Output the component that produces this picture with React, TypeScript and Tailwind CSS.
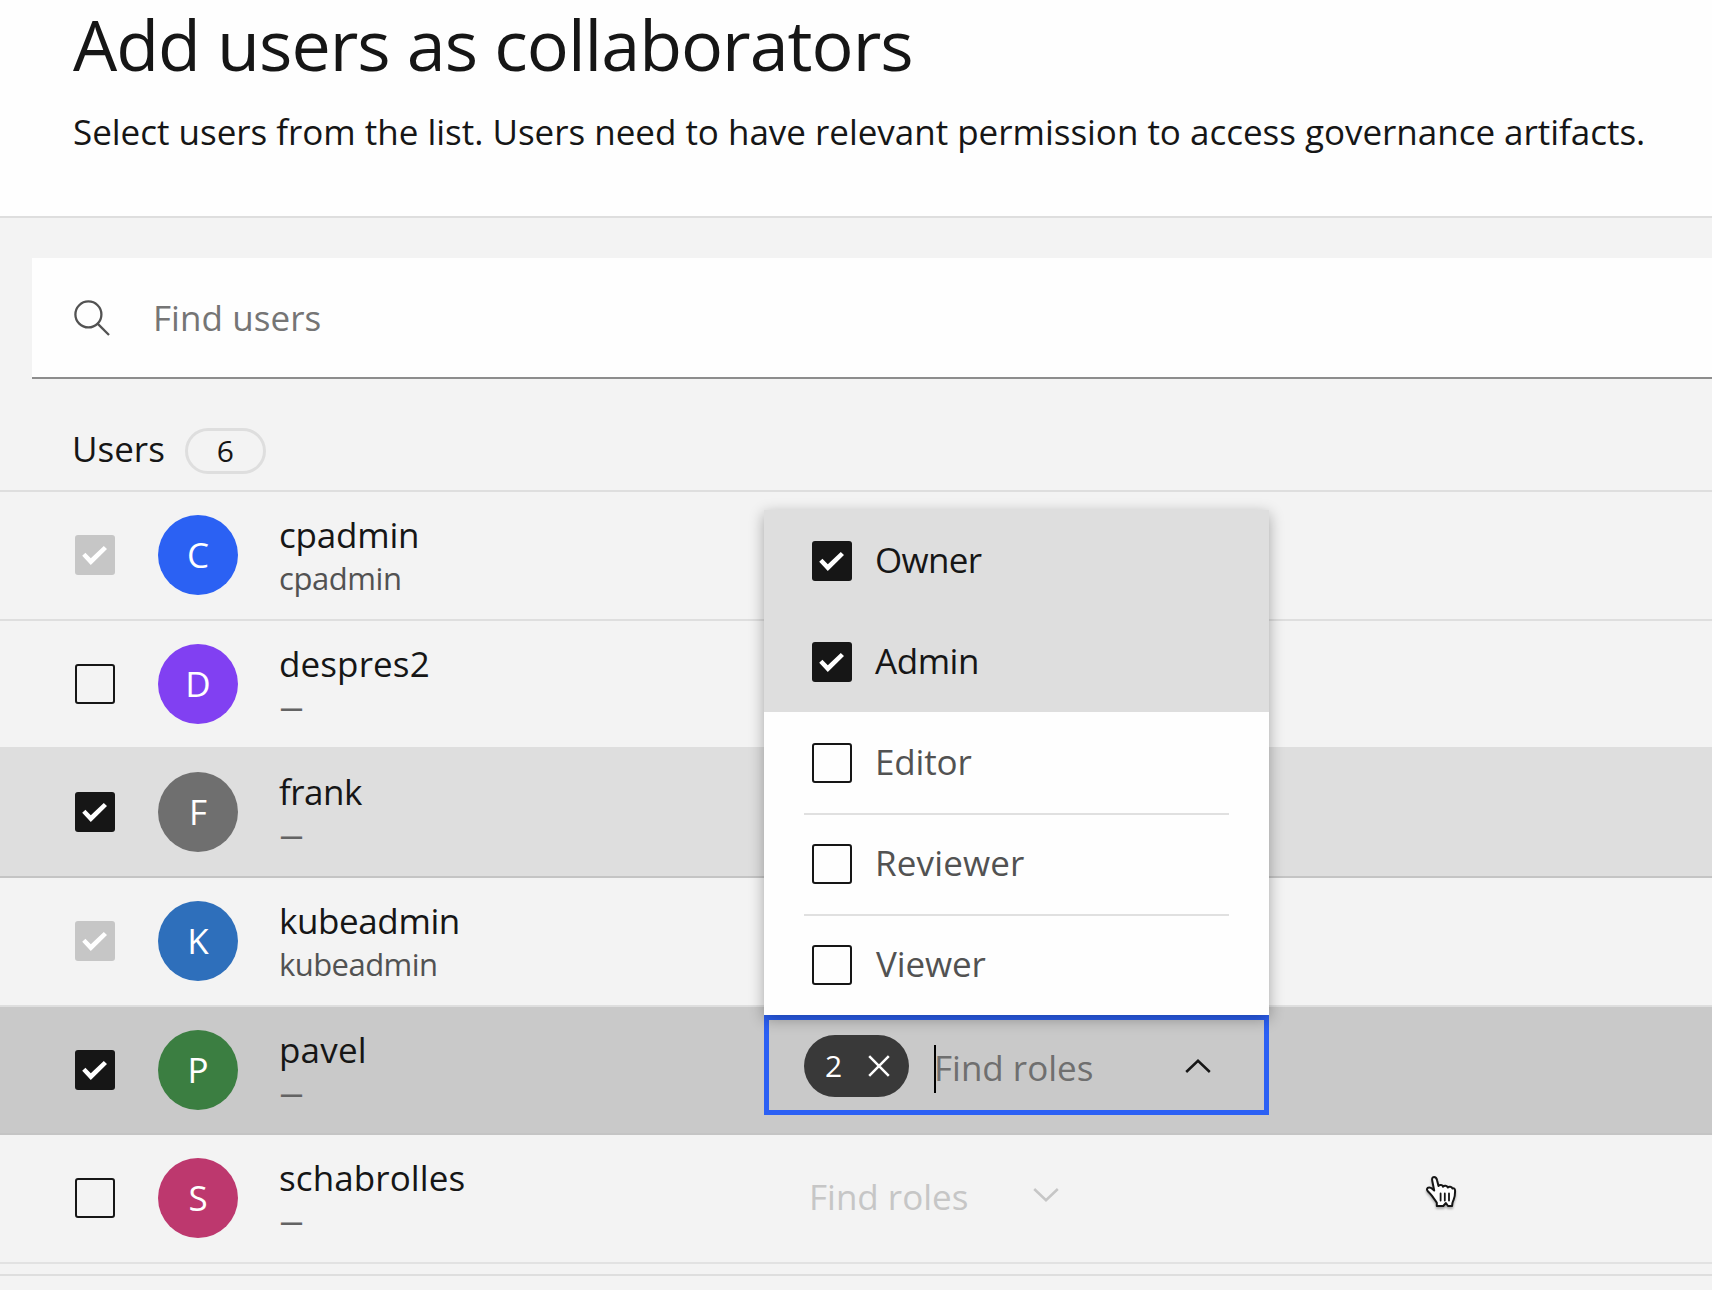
import type { ReactNode } from "react";

function Checkbox({ state }: { state: "on" | "off" | "locked" }) {
  if (state === "off") {
    return <span className="h-10 w-10 shrink-0 rounded-[3px] border-2 border-[#161616]" />;
  }
  return (
    <span
      className={`h-10 w-10 shrink-0 rounded-[3px] ${state === "on" ? "bg-[#161616]" : "bg-[#c6c6c6]"}`}
    >
      <svg viewBox="0 0 40 40" className="h-10 w-10" fill="#fff">
        <path d="M7.2 20.8 10.4 17.7 15.8 23.2 28.8 11 32 14.1 15.8 30Z" />
      </svg>
    </span>
  );
}

function Chevron({ up, className }: { up?: boolean; className: string }) {
  return (
    <svg viewBox="0 0 26 14" className={`h-3.5 w-[26px] ${className}`} fill="none" stroke="currentColor" strokeWidth="2.5">
      <path d={up ? "M1.2 13 13 1.8 24.8 13" : "M1.2 1 13 12.2 24.8 1"} />
    </svg>
  );
}

const roles = [
  { name: "Owner", on: true, text: "ml-[23px] tracking-[-0.7px]" },
  { name: "Admin", on: true, text: "ml-[23px] tracking-[-0.45px]" },
  { name: "Editor", on: false, text: "ml-[23px] tracking-[-0.15px]" },
  { name: "Reviewer", on: false, text: "ml-[23px] tracking-[0.14px]" },
  { name: "Viewer", on: false, text: "ml-6 tracking-[-0.12px]" },
];

function RoleMenu() {
  return (
    <ul className="absolute bottom-[95px] -left-[5px] z-20 h-[505px] w-[505px] bg-[#fefefe] shadow-[0_4px_14px_rgba(0,0,0,0.32)]">
      {roles.map((role, i) => (
        <li
          key={role.name}
          className={`px-10 ${role.on ? "bg-[#dedede] text-[#161616]" : "text-[#525252]"}`}
        >
          <div
            className={`flex h-[101px] items-center pl-2 ${i > 2 ? "border-t-2 border-[#e0e0e0] pb-0.5" : ""}`}
          >
            <Checkbox state={role.on ? "on" : "off"} />
            <span className={`pb-0.5 leading-[48px] ${role.text}`}>{role.name}</span>
          </div>
        </li>
      ))}
    </ul>
  );
}

function ActiveRoleField() {
  return (
    <div className="relative mt-2 flex h-[100px] w-[505px] items-center border-[5px] border-[#2b60f4] pr-[53px] pl-[35px]">
      <RoleMenu />
      <span className="mt-0.5 flex h-[62px] w-[105px] items-center rounded-full bg-[#393939] pr-[19px] pl-[21px] text-white">
        <span className="text-[30px] leading-10">2</span>
        <svg viewBox="0 0 22 22" className="ml-auto h-[22px] w-[22px]" stroke="currentColor" strokeWidth="2.5">
          <path d="M1.2 1.2 20.8 20.8M20.8 1.2 1.2 20.8" />
        </svg>
      </span>
      <span className="mt-2 ml-[25px] h-12 w-0.5 bg-black" />
      <span className="mt-1.5 -ml-0.5 leading-[48px] text-[#6f6f6f]">Find roles</span>
      <Chevron up className="mt-0.5 ml-auto text-[#161616]" />
    </div>
  );
}

function DisabledRoleField() {
  return (
    <div className="mt-2 flex h-[100px] w-[505px] items-center pl-[45px] text-[#c6c6c6]">
      <span className="mt-2 leading-[48px]">Find roles</span>
      <Chevron className="mt-1 ml-[65px]" />
    </div>
  );
}

type User = {
  name: string;
  nameStyle: string;
  login?: string;
  loginStyle?: string;
  initial: string;
  avatar: string;
  box: "on" | "off" | "locked";
  row: string;
  field?: ReactNode;
};

const users: User[] = [
  {
    name: "cpadmin", nameStyle: "tracking-[-0.21px]", login: "cpadmin", loginStyle: "tracking-[-0.42px]",
    initial: "C", avatar: "bg-[#2b61f3]", box: "locked", row: "h-[129px] border-[#dedede]",
  },
  {
    name: "despres2", nameStyle: "tracking-[0.12px]",
    initial: "D", avatar: "bg-[#8140f2]", box: "off", row: "h-[128px] border-[#dedede]",
  },
  {
    name: "frank", nameStyle: "tracking-[-0.5px]",
    initial: "F", avatar: "bg-[#6f6f6f]", box: "on", row: "h-[129px] border-[#c4c4c4] bg-[#dedede]",
  },
  {
    name: "kubeadmin", nameStyle: "tracking-[-0.4px]", login: "kubeadmin", loginStyle: "tracking-[-0.55px]",
    initial: "K", avatar: "bg-[#2e6fbb]", box: "locked", row: "h-[129px] border-[#dedede]",
  },
  {
    name: "pavel", nameStyle: "tracking-[0.2px]",
    initial: "P", avatar: "bg-[#3b7e41]", box: "on", row: "h-[128px] border-[#c4c4c4] bg-[#c9c9c9]",
    field: <ActiveRoleField />,
  },
  {
    name: "schabrolles", nameStyle: "tracking-[0.1px]",
    initial: "S", avatar: "bg-[#bd386e]", box: "off", row: "h-[129px] border-[#e2e2e2]",
    field: <DisabledRoleField />,
  },
];

function UserRow({ user }: { user: User }) {
  return (
    <li className={`flex items-start border-b-2 ${user.row}`}>
      <div className="flex h-[126px] w-[764px] shrink-0 items-center pl-[75px]">
        <Checkbox state={user.box} />
        <span
          className={`ml-[43px] flex h-20 w-20 shrink-0 items-center justify-center rounded-full leading-[48px] text-white ${user.avatar}`}
        >
          {user.initial}
        </span>
        <div className="ml-[41px] self-start pt-[23px]">
          <div className={`h-[42px] leading-10 ${user.nameStyle}`}>{user.name}</div>
          {user.login ? (
            <div className={`text-[31px] leading-[42px] text-[#525252] ${user.loginStyle}`}>{user.login}</div>
          ) : (
            <div className="pl-px text-[23px] leading-[42px] font-bold text-[#636363]">—</div>
          )}
        </div>
      </div>
      {user.field}
    </li>
  );
}

function PointerCursor() {
  return (
    <svg
      viewBox="0 0 32 34"
      className="absolute top-[1175px] left-[1425px] h-[34px] w-8 drop-shadow-[0_2px_1px_rgba(0,0,0,0.3)]"
      fill="#fff"
      stroke="#161616"
      strokeWidth="2"
      strokeLinejoin="round"
      strokeLinecap="round"
    >
      <path d="M11.8 31v-3.200C10.200 25 8.600 23.200 6.600 20.400 4.400 17.300 1.500 15.800 2 13.900c.6-2.200 3.800-1.500 5.200-.2L9.200 15.500 7.300 6C6.700 3.500 7.300 2 9 2c1.700 0 2.700 1.500 3.100 3.400l1.400 5.600c1-1.500 4.200-1.500 4.600.8 1-1.500 4-1.300 4.600.8 1-1.400 4.100-1.200 4.700 1 1.200-.9 2.700 0 2.700 2.300 0 4.100-.6 6.800-1.500 8.900-.8 1.900-1.500 2.400-1.500 6.200h-4.100l-2.100-3-2.600 3Z" />
      <path d="M15.600 18.500v7M19.800 18.500v7M24 18.500v7" strokeWidth="1.800" />
    </svg>
  );
}

export default function App() {
  return (
    <div className="relative h-[1290px] w-[1712px] overflow-hidden bg-[#f3f3f3] font-['Open_Sans',sans-serif] text-[35px] whitespace-nowrap text-[#161616]">
      <header className="h-[218px] border-b-2 border-[#dedede] bg-[#fefefe] pt-1">
        <h1 className="ml-[73px] text-[70px] leading-[80px] tracking-[-1px]">Add users as collaborators</h1>
        <p className="mt-6 ml-[73px] leading-[48px] tracking-[-0.02px]">
          Select users from the list. Users need to have relevant permission to access governance artifacts.
        </p>
      </header>

      <div className="mt-10 ml-8 flex h-[121px] items-center border-b-2 border-[#8d8d8d] bg-[#fefefe] pl-[42px]">
        <svg viewBox="0 0 36 36" className="h-9 w-9" fill="none" stroke="#525252" strokeWidth="2.3">
          <circle cx="14.400" cy="14.400" r="13" />
          <path d="M23.600 23.600 35 35" />
        </svg>
        <span className="ml-[43px] leading-[48px] tracking-[0.06px] text-[#757575]">Find users</span>
      </div>

      <div className="flex h-[113px] items-start border-b-2 border-[#dedede] pt-[46px]">
        <h2 className="ml-[72px] leading-[48px]">Users</h2>
        <span className="mt-[3px] ml-5 flex h-[46px] w-[81px] items-center justify-center rounded-full border-[3px] border-[#dedede] text-[30px] leading-10">
          6
        </span>
      </div>

      <ul>
        {users.map((user) => (
          <UserRow key={user.name} user={user} />
        ))}
      </ul>
      <div className="mt-2.5 border-t-2 border-[#dedede]" />

      <PointerCursor />
    </div>
  );
}
